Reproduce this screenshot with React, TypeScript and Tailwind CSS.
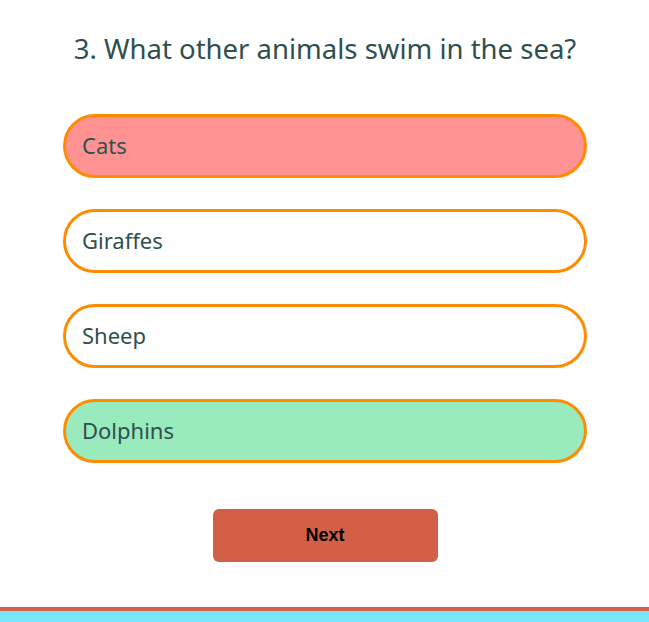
import React from 'react';

const options = [
  { label: 'Cats', state: 'wrong' },
  { label: 'Giraffes', state: 'none' },
  { label: 'Sheep', state: 'none' },
  { label: 'Dolphins', state: 'right' },
];

export default function App() {
  return (
    <div className="flex flex-col h-[622px] bg-white overflow-hidden" style={{ fontFamily: '"Noto Sans", sans-serif' }}>
      <div className="flex-1 flex flex-col items-center pt-[29px] pl-[1px]">
        <h1 className="text-[27.5px] leading-[40px] text-[#2f4f4f] text-center">
          3. What other animals swim in the sea?
        </h1>

        <div className="flex flex-col gap-[31px] mt-[45px] w-[524px]">
          {options.map((o) => (
            <button
              key={o.label}
              className={`h-[64px] rounded-[32px] border-[3px] border-[#ff8c00] text-left pl-[16px] pb-[1px] text-[22px] text-[#2f4f4f] ${
                o.state === 'wrong' ? 'bg-[#ff9393]' : o.state === 'right' ? 'bg-[#99eabc]' : 'bg-white'
              }`}
            >
              {o.label}
            </button>
          ))}
        </div>

        <button
          className="mt-[46px] w-[225px] h-[53px] rounded-[6px] bg-[#d35f47] text-black font-bold text-[18px]"
          style={{ fontFamily: '"Liberation Sans", Arial, sans-serif' }}
        >
          Next
        </button>
      </div>

      <div className="h-[15px] border-t-4 border-[#d35f47] bg-[#76e4fd]" />
    </div>
  );
}
